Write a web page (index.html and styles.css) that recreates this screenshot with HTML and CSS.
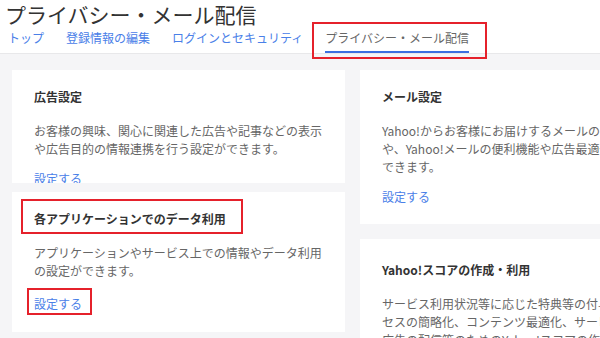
FILE: index.html
```html
<!DOCTYPE html>
<html lang="ja">

<head>
    <meta charset="utf-8">
    <meta name="viewport" content="width=device-width, initial-scale=1.0">
    <title>プライバシー・メール配信</title>
    <link rel="stylesheet" href="styles.css">
</head>

<body>
    <header class="kopf">
        <h1 class="sidetitel">プライバシー・メール配信</h1>
        <nav class="faner">
            <a href="#" class="fane">トップ</a>
            <a href="#" class="fane">登録情報の編集</a>
            <a href="#" class="fane">ログインとセキュリティ</a>
            <a href="#" class="fane aktiv">プライバシー・メール配信<span class="markering tab-mark"></span></a>
        </nav>
    </header>

    <main class="indhold">
        <div class="kolonne venstre">
            <article class="kort kort-kort">
                <h2 class="kort-titel">広告設定</h2>
                <p class="kort-tekst">お客様の興味、関心に関連した広告や記事などの表示や広告目的の情報連携を行う設定ができます。</p>
                <a href="#" class="kort-link">設定する</a>
            </article>
            <article class="kort app">
                <h2 class="kort-titel">各アプリケーションでのデータ利用<span class="markering titel-mark"></span></h2>
                <p class="kort-tekst">アプリケーションやサービス上での情報やデータ利用の設定ができます。</p>
                <a href="#" class="kort-link">設定する<span class="markering link-mark"></span></a>
            </article>
        </div>
        <div class="kolonne hoejre">
            <article class="kort">
                <h2 class="kort-titel">メール設定</h2>
                <p class="kort-tekst">Yahoo!からお客様にお届けするメールの配信設定や、Yahoo!メールの便利機能や広告最適化の設定ができます。</p>
                <a href="#" class="kort-link">設定する</a>
            </article>
            <article class="kort score">
                <h2 class="kort-titel">Yahoo!スコアの作成・利用</h2>
                <p class="kort-tekst">サービス利用状況等に応じた特典等の付与、各種アクセスの簡略化、コンテンツ最適化、サービスの改善、広告の配信等のためのYahoo!スコアの作成と利用の設定ができます。</p>
                <a href="#" class="kort-link">設定する</a>
            </article>
        </div>
    </main>
</body></html>
```

FILE: styles.css
```css
body {
    margin: 0;
    font-family: "Noto Sans CJK JP", "Noto Sans", sans-serif;
    background-color: #f5f5f7;
    color: #333;
    overflow: hidden;
}

.kopf {
    background-color: #fff;
    border-bottom: 1px solid #e8e8ea;
}

.sidetitel {
    margin: 0;
    padding-left: 5px;
    font-size: 21px;
    line-height: 28px;
    font-weight: normal;
    color: #333;
}

.faner {
    display: flex;
    gap: 22px;
    padding-left: 8px;
}

.fane {
    position: relative;
    font-size: 12px;
    line-height: 20px;
    padding-bottom: 3px;
    border-bottom: 2px solid transparent;
    color: #4a80e8;
    text-decoration: none;
}

.aktiv {
    color: #666;
    border-bottom-color: #3c6fe0;
}

.indhold {
    display: flex;
    gap: 15px;
    padding: 16px 12px;
}

.kolonne {
    display: flex;
    flex-direction: column;
    flex: 0 0 333px;
}

.venstre {
    gap: 9px;
}

.hoejre {
    gap: 15px;
}

.kort {
    background-color: #fff;
    padding: 18px 22px;
}

.kort-kort {
    height: 77px;
    overflow: hidden;
}

.app {
    padding-bottom: 19px;
}

.app .kort-tekst {
    margin-bottom: 15px;
}

.score {
    padding-top: 22px;
}

.kort-titel {
    position: relative;
    margin: 0;
    font-size: 12px;
    line-height: 18px;
    font-weight: bold;
    color: #333;
}

.kort-tekst {
    margin: 16px 0 12px;
    font-size: 12px;
    line-height: 18px;
    color: #666;
}

.kort-link {
    position: relative;
    display: block;
    width: fit-content;
    font-size: 12px;
    line-height: 18px;
    color: #4a80e8;
    text-decoration: none;
}

.markering {
    position: absolute;
    border: 2px solid #e5212b;
    box-sizing: border-box;
}

.tab-mark {
    top: -6px;
    right: -18px;
    bottom: -8px;
    left: -13px;
}

.titel-mark {
    top: -11px;
    left: -13px;
    width: 222px;
    height: 35px;
}

.link-mark {
    top: -7px;
    left: -7px;
    width: 65px;
    height: 27px;
}
```
